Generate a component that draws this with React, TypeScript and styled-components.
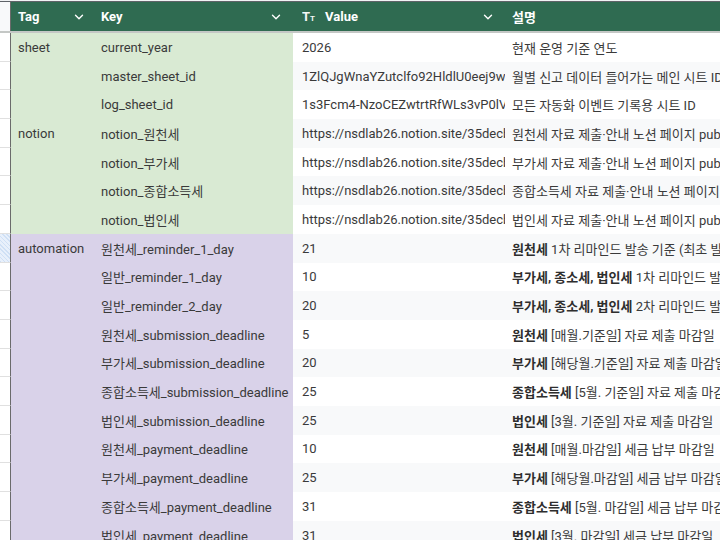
import React from "react";
import styled, { createGlobalStyle } from "styled-components";

const Global = createGlobalStyle`
  html, body { margin: 0; padding: 0; background: #fff; overflow: hidden; }
  body { font-family: Roboto, "Noto Sans CJK KR", "Liberation Sans", sans-serif; }
`;

const COLS = "11px 82px 200px 212px 1fr";

const Sheet = styled.div`
  width: 720px;
  height: 540px;
  overflow: hidden;
  display: flex;
  flex-direction: column;
  color: #3a3a3a;
  font-size: 13px;
`;

const TopEdge = styled.div`
  height: 2px;
  flex: none;
  background: #f1f3f4;
  border-bottom: 1px solid #5f6368;
  box-sizing: border-box;
`;

const HeaderRow = styled.div`
  display: grid;
  grid-template-columns: ${COLS};
  height: 31px;
  flex: none;
  border-bottom: 2px solid #c4c7c5;
  box-sizing: border-box;
`;

const StripHead = styled.div`
  background: #f8f9fa;
  border-right: 1px solid #6b6b6b;
`;

const HeadCell = styled.div<{ $pl: number; $pr?: number }>`
  background: #2f6b51;
  color: #fff;
  font-weight: 700;
  font-size: 13px;
  display: flex;
  align-items: center;
  padding-left: ${(p) => p.$pl}px;
  padding-right: ${(p) => p.$pr ?? 0}px;
  gap: 10px;
  overflow: hidden;
  white-space: nowrap;
`;

const HeadLabel = styled.span`
  flex: 1;
`;

const TypeIcon = styled.span`
  font-weight: 700;
  font-size: 13px;
  letter-spacing: 0;
  opacity: 0.95;
  & small {
    font-size: 8px;
    font-weight: 700;
  }
`;

const Body = styled.div`
  display: flex;
  flex-direction: column;
`;

const Row = styled.div`
  display: grid;
  grid-template-columns: ${COLS};
  height: 28.7px;
  flex: none;
`;

const Strip = styled.div<{ $sel?: boolean }>`
  background: ${(p) =>
    p.$sel
      ? "repeating-linear-gradient(45deg, #cfe0f5 0 1px, #e8f0fb 1px 3px)"
      : "#fff"};
  border-right: 1px solid #6b6b6b;
  border-bottom: 1px solid #e0e0e0;
  box-sizing: border-box;
`;

const Cell = styled.div<{ $bg: string; $pl: number; $bold?: boolean }>`
  background: ${(p) => p.$bg};
  padding-left: ${(p) => p.$pl}px;
  display: flex;
  align-items: center;
  white-space: nowrap;
  overflow: hidden;
  font-weight: ${(p) => (p.$bold ? 700 : 400)};
`;

const Strong = styled.b`
  font-weight: 700;
  color: #2e2e2e;
`;

const Chevron = () => (
  <svg width="12" height="12" viewBox="0 0 12 12" fill="none">
    <path d="M2.5 4.2 L6 7.7 L9.5 4.2" stroke="#fff" strokeWidth="1.4" strokeLinecap="round" strokeLinejoin="round" />
  </svg>
);

type Item = { tag?: string; key: string; value: string; bold?: string; desc: string; group: "g" | "p" };

const rows: Item[] = [
  { tag: "sheet", key: "current_year", value: "2026", desc: "현재 운영 기준 연도", group: "g" },
  { key: "master_sheet_id", value: "1ZlQJgWnaYZutclfo92HldlU0eej9wXqP", desc: "월별 신고 데이터 들어가는 메인 시트 ID", group: "g" },
  { key: "log_sheet_id", value: "1s3Fcm4-NzoCEZwtrtRfWLs3vP0lVbQe", desc: "모든 자동화 이벤트 기록용 시트 ID", group: "g" },
  { tag: "notion", key: "notion_원천세", value: "https://nsdlab26.notion.site/35decb1a", desc: "원천세 자료 제출·안내 노션 페이지 publish", group: "g" },
  { key: "notion_부가세", value: "https://nsdlab26.notion.site/35decb1a", desc: "부가세 자료 제출·안내 노션 페이지 publish", group: "g" },
  { key: "notion_종합소득세", value: "https://nsdlab26.notion.site/35decb1a", desc: "종합소득세 자료 제출·안내 노션 페이지 publish", group: "g" },
  { key: "notion_법인세", value: "https://nsdlab26.notion.site/35decb1a", desc: "법인세 자료 제출·안내 노션 페이지 publish", group: "g" },
  { tag: "automation", key: "원천세_reminder_1_day", value: "21", bold: "원천세", desc: " 1차 리마인드 발송 기준 (최초 발송)", group: "p" },
  { key: "일반_reminder_1_day", value: "10", bold: "부가세, 종소세, 법인세", desc: " 1차 리마인드 발송 기준", group: "p" },
  { key: "일반_reminder_2_day", value: "20", bold: "부가세, 종소세, 법인세", desc: " 2차 리마인드 발송 기준", group: "p" },
  { key: "원천세_submission_deadline", value: "5", bold: "원천세", desc: " [매월.기준일] 자료 제출 마감일", group: "p" },
  { key: "부가세_submission_deadline", value: "20", bold: "부가세", desc: " [해당월.기준일] 자료 제출 마감일", group: "p" },
  { key: "종합소득세_submission_deadline", value: "25", bold: "종합소득세", desc: " [5월. 기준일] 자료 제출 마감일", group: "p" },
  { key: "법인세_submission_deadline", value: "25", bold: "법인세", desc: " [3월. 기준일] 자료 제출 마감일", group: "p" },
  { key: "원천세_payment_deadline", value: "10", bold: "원천세", desc: " [매월.마감일] 세금 납부 마감일", group: "p" },
  { key: "부가세_payment_deadline", value: "25", bold: "부가세", desc: " [해당월.마감일] 세금 납부 마감일", group: "p" },
  { key: "종합소득세_payment_deadline", value: "31", bold: "종합소득세", desc: " [5월. 마감일] 세금 납부 마감일", group: "p" },
  { key: "법인세_payment_deadline", value: "31", bold: "법인세", desc: " [3월. 마감일] 세금 납부 마감일", group: "p" },
];

const GROUP_BG = { g: "#d9ead3", p: "#d9d2e9" };

export default function App() {
  return (
    <>
      <Global />
      <Sheet>
        <TopEdge />
        <HeaderRow>
          <StripHead />
          <HeadCell $pl={7} $pr={8}>
            <HeadLabel>Tag</HeadLabel>
            <Chevron />
          </HeadCell>
          <HeadCell $pl={8} $pr={11}>
            <HeadLabel>Key</HeadLabel>
            <Chevron />
          </HeadCell>
          <HeadCell $pl={9} $pr={11}>
            <TypeIcon>
              T<small>T</small>
            </TypeIcon>
            <HeadLabel>Value</HeadLabel>
            <Chevron />
          </HeadCell>
          <HeadCell $pl={7}>
            <HeadLabel>설명</HeadLabel>
          </HeadCell>
        </HeaderRow>
        <Body>
          {rows.map((r, i) => {
            const band = i % 2 === 0 ? "#ffffff" : "#f8f9fa";
            const gbg = GROUP_BG[r.group];
            return (
              <Row key={r.key}>
                <Strip $sel={i === 7} />
                <Cell $bg={gbg} $pl={7}>{r.tag ?? ""}</Cell>
                <Cell $bg={gbg} $pl={8}>{r.key}</Cell>
                <Cell $bg={band} $pl={9}>{r.value}</Cell>
                <Cell $bg={band} $pl={7}>
                  {r.bold && <Strong>{r.bold}</Strong>}
                  <span style={{ whiteSpace: "pre" }}>{r.desc}</span>
                </Cell>
              </Row>
            );
          })}
        </Body>
      </Sheet>
    </>
  );
}
